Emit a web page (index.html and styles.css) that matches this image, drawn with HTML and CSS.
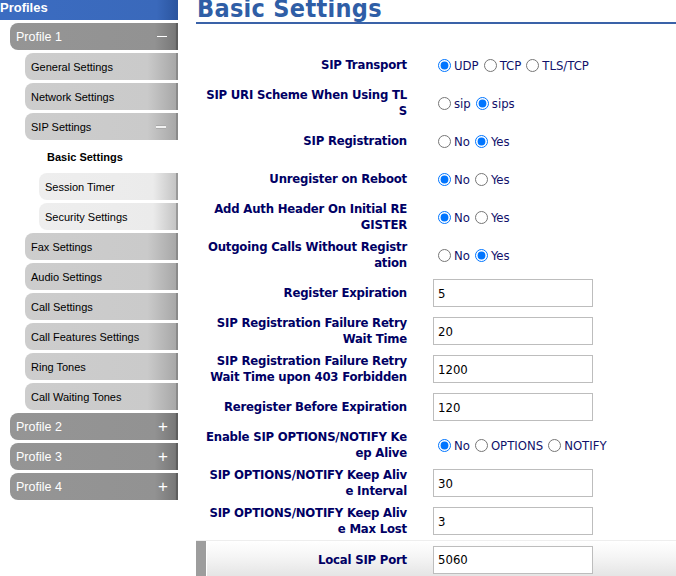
FILE: index.html
```html
<!DOCTYPE html>
<html lang="en">

<head>
    <meta charset="UTF-8">
    <meta name="viewport" content="width=device-width, initial-scale=1.0">
    <title>Basic Settings</title>
    <link rel="stylesheet" href="styles.css">
</head>

<body>
    <div class="page">
        <nav class="side">
            <div class="side-head">Profiles</div>
            <div class="profile">Profile 1<span class="minus"></span></div>
            <div class="item">General Settings</div>
            <div class="item">Network Settings</div>
            <div class="item">SIP Settings<span class="minus small"></span></div>
            <div class="leaf current">Basic Settings</div>
            <div class="leaf">Session Timer</div>
            <div class="leaf">Security Settings</div>
            <div class="item">Fax Settings</div>
            <div class="item">Audio Settings</div>
            <div class="item">Call Settings</div>
            <div class="item">Call Features Settings</div>
            <div class="item">Ring Tones</div>
            <div class="item">Call Waiting Tones</div>
            <div class="profile">Profile 2<span class="plus">+</span></div>
            <div class="profile">Profile 3<span class="plus">+</span></div>
            <div class="profile">Profile 4<span class="plus">+</span></div>
        </nav>

        <main class="content">
            <h1>Basic Settings</h1>
            <div class="form">
                <div class="row">
                    <div class="label">SIP Transport</div>
                    <div class="value">
                        <label><input type="radio" name="transport" checked>UDP</label>
                        <label><input type="radio" name="transport">TCP</label>
                        <label><input type="radio" name="transport">TLS/TCP</label>
                    </div>
                </div>
                <div class="row">
                    <div class="label">SIP URI Scheme When Using TL<br>S</div>
                    <div class="value">
                        <label><input type="radio" name="scheme">sip</label>
                        <label><input type="radio" name="scheme" checked>sips</label>
                    </div>
                </div>
                <div class="row">
                    <div class="label">SIP Registration</div>
                    <div class="value">
                        <label><input type="radio" name="reg">No</label>
                        <label><input type="radio" name="reg" checked>Yes</label>
                    </div>
                </div>
                <div class="row">
                    <div class="label">Unregister on Reboot</div>
                    <div class="value">
                        <label><input type="radio" name="unreg" checked>No</label>
                        <label><input type="radio" name="unreg">Yes</label>
                    </div>
                </div>
                <div class="row">
                    <div class="label">Add Auth Header On Initial RE<br>GISTER</div>
                    <div class="value">
                        <label><input type="radio" name="auth" checked>No</label>
                        <label><input type="radio" name="auth">Yes</label>
                    </div>
                </div>
                <div class="row">
                    <div class="label">Outgoing Calls Without Registr<br>ation</div>
                    <div class="value">
                        <label><input type="radio" name="outgoing">No</label>
                        <label><input type="radio" name="outgoing" checked>Yes</label>
                    </div>
                </div>
                <div class="row">
                    <div class="label">Register Expiration</div>
                    <div class="value"><input type="text" value="5"></div>
                </div>
                <div class="row">
                    <div class="label">SIP Registration Failure Retry<br>Wait Time</div>
                    <div class="value"><input type="text" value="20"></div>
                </div>
                <div class="row">
                    <div class="label">SIP Registration Failure Retry<br>Wait Time upon 403 Forbidden</div>
                    <div class="value"><input type="text" value="1200"></div>
                </div>
                <div class="row">
                    <div class="label">Reregister Before Expiration</div>
                    <div class="value"><input type="text" value="120"></div>
                </div>
                <div class="row">
                    <div class="label">Enable SIP OPTIONS/NOTIFY Ke<br>ep Alive</div>
                    <div class="value">
                        <label><input type="radio" name="keep" checked>No</label>
                        <label><input type="radio" name="keep">OPTIONS</label>
                        <label><input type="radio" name="keep">NOTIFY</label>
                    </div>
                </div>
                <div class="row">
                    <div class="label">SIP OPTIONS/NOTIFY Keep Aliv<br>e Interval</div>
                    <div class="value"><input type="text" value="30"></div>
                </div>
                <div class="row">
                    <div class="label">SIP OPTIONS/NOTIFY Keep Aliv<br>e Max Lost</div>
                    <div class="value"><input type="text" value="3"></div>
                </div>
                <div class="row hover">
                    <div class="label">Local SIP Port</div>
                    <div class="value"><input type="text" value="5060"></div>
                </div>
            </div>
        </main>
    </div>
</body>

</html>
```

FILE: styles.css
```css
body {
    margin: 0;
    padding: 0;
    background-color: #fff;
    font-family: "Liberation Sans", Arial, sans-serif;
    overflow: hidden;
}

.page {
    display: flex;
    align-items: flex-start;
}

/* sidebar */

.side {
    width: 178px;
    flex-shrink: 0;
    display: flex;
    flex-direction: column;
    align-items: flex-end;
    gap: 3px;
}

.side-head {
    align-self: stretch;
    height: 20px;
    line-height: 16px;
    color: #fff;
    font-size: 13px;
    font-weight: bold;
    background: linear-gradient(90deg, #3b6cc1 0, #3a69bb 88%, #2a549e 100%);
}

.profile,
.item,
.leaf {
    box-sizing: border-box;
    height: 27px;
    display: flex;
    align-items: center;
    justify-content: space-between;
    border-radius: 8px 0 0 8px;
}

.profile {
    width: 168px;
    padding: 0 0 0 6px;
    color: #fff;
    font-size: 12.5px;
    background: linear-gradient(90deg, #959595 0, #929292 86%, #787878 98.5%, #5e5e5e 98.6%);
}

.item {
    width: 153px;
    padding-left: 6px;
    color: #000;
    font-size: 11px;
    background: linear-gradient(90deg, #cdcdcd 0, #cacaca 80%, #a8a8a8 98.5%, #8a8a8a 98.6%);
}

.leaf {
    width: 139px;
    padding-left: 6px;
    color: #000;
    font-size: 11px;
    background: linear-gradient(90deg, #eeeeee 0, #ebebeb 82%, #c4c4c4 98.5%, #999 98.6%);
}

.leaf.current {
    background: none;
    font-weight: bold;
    padding-left: 8px;
}

.minus {
    width: 10px;
    height: 1px;
    margin-right: 11px;
    background: #fff;
}

.minus.small {
    height: 2px;
    background: #f2f2f2;
    border: 1px solid #aaa;
    border-left: none;
    border-right: none;
    margin-right: 12px;
}

.plus {
    font-size: 17px;
    font-weight: normal;
    margin-right: 10px;
    line-height: 1;
}

/* main area */

.content {
    flex: 1;
    margin-left: 18px;
    font-family: "DejaVu Sans Condensed", "DejaVu Sans", sans-serif;
    font-stretch: condensed;
}

h1 {
    margin: -3px 0 0;
    padding: 0 0 0 1px;
    height: 25px;
    line-height: 24px;
    font-size: 25px;
    font-weight: bold;
    color: #2f5ea6;
    border-bottom: 2px solid #3a62a8;
    letter-spacing: 0.3px;
}

.form {
    margin-top: 22px;
}

.row {
    display: flex;
    align-items: center;
    height: 38px;
}

.label {
    box-sizing: border-box;
    width: 211px;
    text-align: right;
    font-size: 13px;
    font-weight: bold;
    line-height: 16px;
    letter-spacing: -0.2px;
    color: #000064;
}

.value {
    margin-left: 26px;
    font-size: 13px;
    color: #10106a;
    display: flex;
    align-items: center;
}

.value label {
    display: flex;
    align-items: center;
}

input[type="radio"] {
    width: 13px;
    height: 13px;
    margin: 0 3px 0 5px;
}

input[type="text"] {
    box-sizing: border-box;
    width: 160px;
    height: 28px;
    padding: 0 4px;
    border: 1px solid #bdbdbd;
    font-family: "DejaVu Sans Condensed", "DejaVu Sans", sans-serif;
    font-size: 13px;
    color: #000;
}

.row.hover {
    box-sizing: border-box;
    border-top: 1px solid #eee;
    background:
        linear-gradient(90deg, #9d9d9d 0, #9d9d9d 10px, #fff 10px, #fff 11px, transparent 11px),
        linear-gradient(180deg, #fff 0, #f6f6f6 40%, #e3e3e3 100%);
}
```
